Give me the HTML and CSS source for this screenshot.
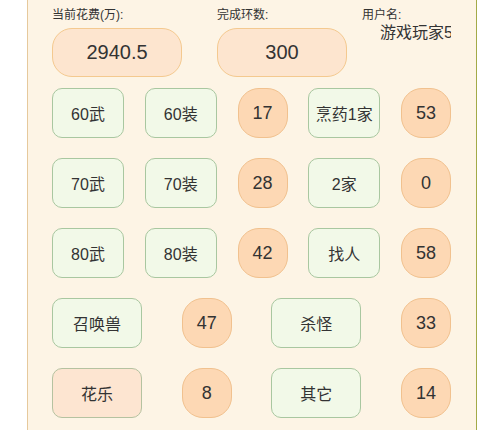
FILE: index.html
```html
<!DOCTYPE html>
<html lang="zh">
<head>
<meta charset="utf-8">
<link rel="stylesheet" href="styles.css">
</head>
<body>
<div class="page">
  <div class="panel">
    <div class="top">
      <div class="col col-cost">
        <div class="label">当前花费(万):</div>
        <div class="pill">2940.5</div>
      </div>
      <div class="col col-rounds">
        <div class="label">完成环数:</div>
        <div class="pill">300</div>
      </div>
      <div class="col col-user">
        <div class="label">用户名:</div>
        <div class="username">游戏玩家5201314</div>
      </div>
    </div>

    <div class="row">
      <div class="btn">60武</div>
      <div class="btn">60装</div>
      <div class="num">17</div>
      <div class="btn">烹药1家</div>
      <div class="num">53</div>
    </div>
    <div class="row">
      <div class="btn">70武</div>
      <div class="btn">70装</div>
      <div class="num">28</div>
      <div class="btn">2家</div>
      <div class="num">0</div>
    </div>
    <div class="row">
      <div class="btn">80武</div>
      <div class="btn">80装</div>
      <div class="num">42</div>
      <div class="btn">找人</div>
      <div class="num">58</div>
    </div>
    <div class="row">
      <div class="btn wide">召唤兽</div>
      <div class="num">47</div>
      <div class="btn wide">杀怪</div>
      <div class="num">33</div>
    </div>
    <div class="row">
      <div class="btn wide peach">花乐</div>
      <div class="num">8</div>
      <div class="btn wide">其它</div>
      <div class="num">14</div>
    </div>
  </div>
</div>
</body>
</html>
```

FILE: styles.css
```css
html, body {
  margin: 0;
  padding: 0;
  background: #ffffff;
}

body {
  font-family: "Liberation Sans", "Noto Sans CJK SC", sans-serif;
  color: #333333;
}

.page {
  padding: 0 27px;
  height: 430px;
  overflow: hidden;
}

.panel {
  box-sizing: border-box;
  width: 450px;
  min-height: 430px;
  background: #fdf4e5;
  border-left: 1px solid #e6c99c;
  border-right: 1px solid #a3aa48;
  padding: 7px 25px 0 24px;
}

.top {
  display: flex;
}

.col-cost,
.col-rounds {
  width: 130px;
}

.col-rounds {
  margin-left: 35px;
}

.col-user {
  margin-left: 15px;
  flex: 1;
  min-width: 0;
  overflow: hidden;
}

.label {
  font-size: 12px;
  line-height: 16px;
  height: 16px;
  color: #333333;
  white-space: nowrap;
}

.pill {
  box-sizing: border-box;
  margin-top: 5px;
  height: 49px;
  border: 1px solid #f4c98f;
  border-radius: 20px;
  background: #fde5cf;
  display: flex;
  align-items: center;
  justify-content: center;
  font-size: 20px;
}

.username {
  font-size: 16px;
  line-height: 20px;
  padding-left: 18px;
  white-space: nowrap;
  overflow: hidden;
}

.row {
  display: flex;
  justify-content: space-between;
  align-items: center;
  height: 50px;
  margin-top: 20px;
}

.top + .row {
  margin-top: 11px;
}

.btn {
  box-sizing: border-box;
  width: 72px;
  height: 50px;
  border: 1px solid #a9c7a0;
  border-radius: 10px;
  background: #f2f9e8;
  display: flex;
  align-items: center;
  justify-content: center;
  font-size: 16px;
  white-space: nowrap;
}

.btn.wide {
  width: 90px;
}

.btn.peach {
  background: #fde5d1;
  border-color: #b5c2a0;
}

.num {
  box-sizing: border-box;
  width: 50px;
  height: 50px;
  border: 1px solid #f1c18e;
  border-radius: 21px;
  background: #fdd8b4;
  display: flex;
  align-items: center;
  justify-content: center;
  font-size: 18px;
}
```
